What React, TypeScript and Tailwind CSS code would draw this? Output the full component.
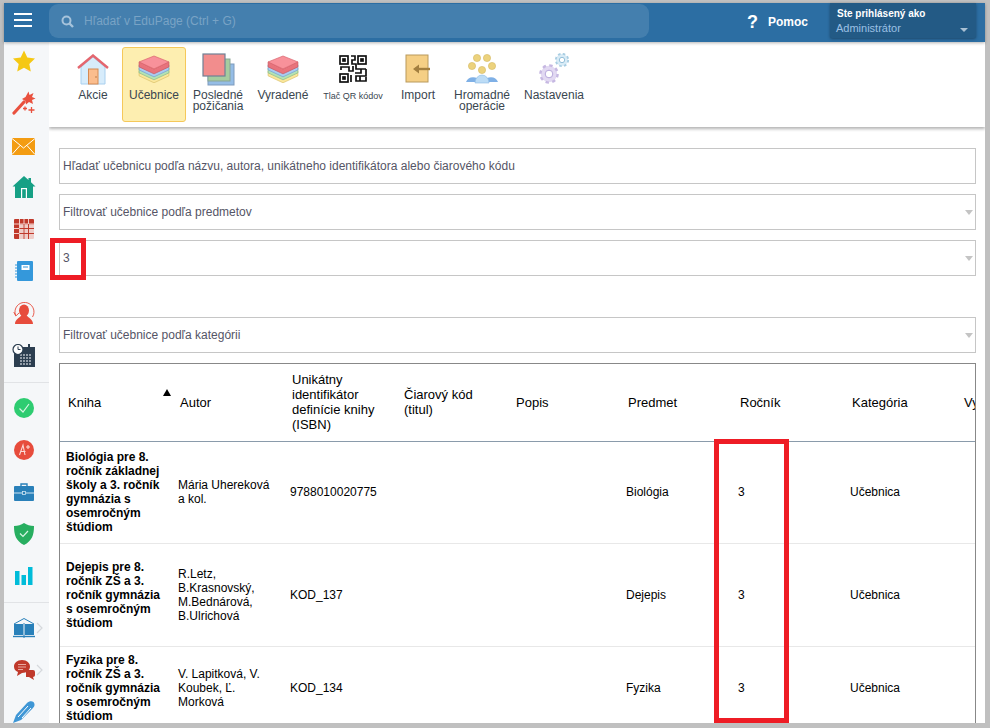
import React from "react";

function Layers({ s = 32 }: { s?: number }) {
  return (
    <svg width={s} height={s * 0.9} viewBox="0 0 32 29">
      <path d="M1 16 L16 23 L31 16 V21 L16 28 L1 21 Z" fill="#fbe79b" stroke="#d9c168" strokeWidth="0.7" />
      <path d="M1 13 L16 20 L31 13 V18 L16 25 L1 18 Z" fill="#b5e2b4" stroke="#85b98a" strokeWidth="0.7" />
      <path d="M1 10 L16 17 L31 10 V15 L16 22 L1 15 Z" fill="#a9cdf2" stroke="#6f9fd2" strokeWidth="0.7" />
      <path d="M1 7 L16 14 L31 7 V12 L16 19 L1 12 Z" fill="#e8737c" stroke="#c9545e" strokeWidth="0.7" />
      <path d="M1 7 L16 1 L31 7 L16 14 Z" fill="#f8919a" stroke="#d9636d" strokeWidth="0.7" />
    </svg>
  );
}

const tools: { label: React.ReactNode; w: string; icon: React.ReactNode; active?: boolean; small?: boolean }[] = [
  {
    label: "Akcie",
    w: "w-[58px]",
    icon: (
      <svg width="32" height="31" viewBox="0 0 32 31">
        <path d="M4 13 L16 3 L28 13 V30 H4 Z" fill="#d7ecfb" stroke="#a9d0ee" />
        <path d="M1 14 L16 1.5 L31 14" fill="none" stroke="#e4666f" strokeWidth="2.4" />
        <rect x="11.5" y="15" width="9.5" height="15" fill="#fbbd8d" stroke="#d58a52" />
        <circle cx="19" cy="23" r="0.7" fill="#a8652e" />
      </svg>
    ),
  },
  { label: "Učebnice", w: "w-[64px]", icon: <Layers />, active: true },
  {
    label: (
      <>
        Posledné
        <br />
        požičania
      </>
    ),
    w: "w-[64px]",
    icon: (
      <svg width="33" height="33" viewBox="0 0 33 33">
        <rect x="6" y="11" width="26" height="21" fill="#95bde6" stroke="#7f9bbd" />
        <rect x="6" y="6" width="22" height="22" fill="#a5cc9f" stroke="#8aa596" />
        <rect x="1" y="1" width="22" height="22" fill="#f28d8d" stroke="#6f8196" strokeWidth="1.2" />
      </svg>
    ),
  },
  { label: "Vyradené", w: "w-[66px]", icon: <Layers /> },
  {
    label: "Tlač QR kódov",
    w: "w-[74px]",
    small: true,
    icon: (
      <svg width="28" height="28" viewBox="0 0 28 28" fill="none" stroke="#111" strokeWidth="1.7">
        <rect x="1" y="1" width="8" height="8" />
        <rect x="4" y="4" width="2" height="2" fill="#111" />
        <rect x="19" y="1" width="8" height="8" />
        <rect x="22" y="4" width="2" height="2" fill="#111" />
        <rect x="1" y="19" width="8" height="8" />
        <rect x="4" y="22" width="2" height="2" fill="#111" />
        <path d="M12 1 H16 V5 H13 V9 H17 V14 H27 M2 15 V12 H10 V16 H14 V11 M12 20 V27 M16 18 H22 V14 M27 14 V21 H17 V26 H27 V22 M21 21 V26" />
      </svg>
    ),
  },
  {
    label: "Import",
    w: "w-[56px]",
    icon: (
      <svg width="26" height="30" viewBox="0 0 26 30">
        <rect x="1" y="1" width="22" height="27" fill="#f5cf85" stroke="#b99a5c" />
        <path d="M25 15 H10" stroke="#a37f3f" strokeWidth="2.4" />
        <path d="M8 15 L14 10.5 V19.5 Z" fill="#a37f3f" />
      </svg>
    ),
  },
  {
    label: (
      <>
        Hromadné
        <br />
        operácie
      </>
    ),
    w: "w-[72px]",
    icon: (
      <svg width="34" height="30" viewBox="0 0 34 30">
        <circle cx="12" cy="4" r="3.6" fill="#ecd27d" stroke="#d3b961" strokeWidth="0.6" />
        <circle cx="22" cy="4" r="3.6" fill="#ecd27d" stroke="#d3b961" strokeWidth="0.6" />
        <circle cx="7" cy="12" r="3.6" fill="#ecd27d" stroke="#d3b961" strokeWidth="0.6" />
        <circle cx="27" cy="12" r="3.6" fill="#ecd27d" stroke="#d3b961" strokeWidth="0.6" />
        <circle cx="17" cy="16" r="3.6" fill="#ecd27d" stroke="#d3b961" strokeWidth="0.6" />
        <path d="M1 28 A7.5 7.5 0 0 1 15 28 Z" fill="#7fb0e6" />
        <path d="M19 28 A7.5 7.5 0 0 1 33 28 Z" fill="#7fb0e6" />
        <path d="M10 29 A7 8 0 0 1 24 29 Z" fill="#bcdcf6" stroke="#8cbbe4" strokeWidth="0.6" />
      </svg>
    ),
  },
  {
    label: "Nastavenia",
    w: "w-[72px]",
    icon: (
      <svg width="32" height="32" viewBox="0 0 32 32">
        <circle cx="11" cy="21" r="6" fill="none" stroke="#e2d9f2" strokeWidth="4.4" />
        <circle cx="11" cy="21" r="8.6" fill="none" stroke="#c6b8e2" strokeWidth="2.4" strokeDasharray="3.4 3.35" />
        <circle cx="11" cy="21" r="3.8" fill="#fff" stroke="#b5a5da" />
        <circle cx="24" cy="7" r="4.4" fill="none" stroke="#d8ebf6" strokeWidth="3.2" />
        <circle cx="24" cy="7" r="6.2" fill="none" stroke="#a8cde2" strokeWidth="1.8" strokeDasharray="2.6 2.27" />
        <circle cx="24" cy="7" r="2.7" fill="#fff" stroke="#94c0da" />
      </svg>
    ),
  },
];

const navA: React.ReactNode[] = [
  <svg key="star" width="24" height="24" viewBox="0 0 24 24"><path d="M12 1.5 L15.3 8.6 L23 9.6 L17.3 14.9 L18.8 22.5 L12 18.7 L5.2 22.5 L6.7 14.9 L1 9.6 L8.7 8.6 Z" fill="#f5c814" /></svg>,
  <svg key="wand" width="24" height="24" viewBox="0 0 24 24">
    <path d="M2 22 L12 11" stroke="#e9513f" strokeWidth="3.2" strokeLinecap="round" />
    <path d="M16.5 0.5 L17.5 4 L21.5 2 L20 6 L23.5 7.5 L20 9 L21 13 L17 11 L14 13.5 L13.5 10 L10 8 L13.5 6 Z" fill="#e9513f" />
    <path d="M19.5 16 v6 M16.5 19 h6 M13 15.5 v4 M11 17.5 h4" stroke="#e9513f" strokeWidth="1.3" />
  </svg>,
  <svg key="mail" width="24" height="20" viewBox="0 -3 24 20">
    <rect width="23" height="17" fill="#f39c12" />
    <path d="M0 0.5 L11.5 10 L23 0.5 M0 16.5 L8 7.5 M23 16.5 L15 7.5" stroke="#fff" strokeWidth="1" fill="none" />
  </svg>,
  <svg key="home" width="24" height="24" viewBox="0 0 24 24">
    <path d="M12 1 L16.5 5 V3 H19 V7.2 L23.5 11.5 H21 V23 H3 V11.5 H0.5 Z" fill="#16a085" />
    <rect x="9" y="13" width="6" height="10" fill="#fff" />
    <rect x="10.2" y="14.2" width="3.6" height="8.8" fill="#16a085" />
  </svg>,
  <svg key="tt" width="20" height="20" viewBox="0 0 20 20">
    <rect width="20" height="20" rx="1" fill="#c0392b" />
    <path d="M5.5 0 V20 M10 0 V20 M14.5 0 V20 M0 5 H20 M0 9.5 H20 M0 14.5 H20" stroke="#f3cfca" strokeWidth="1" />
    <rect x="6" y="5.5" width="14" height="14.5" fill="#fff" opacity="0.75" />
    <path d="M10 5 V20 M14.5 5 V20 M5.5 9.5 H20 M5.5 14.5 H20" stroke="#c0392b" strokeWidth="1" />
  </svg>,
  <svg key="note" width="18" height="21" viewBox="0 0 18 21">
    <rect x="2" width="16" height="20" rx="1" fill="#3498db" />
    <rect x="6.5" y="4" width="8" height="5" fill="#fff" />
    <rect x="8" y="5.5" width="5" height="1" fill="#3498db" />
    <path d="M0 4 H3 M0 7 H3 M0 10 H3 M0 13 H3 M0 16 H3" stroke="#3498db" strokeWidth="1" />
  </svg>,
  <svg key="user" width="22" height="22" viewBox="0 0 22 22">
    <path d="M2.5 13 A9.5 9.5 0 1 1 19.5 15" fill="none" stroke="#e74c3c" strokeWidth="0.9" />
    <path d="M0.8 10 L2.8 14 L6 11" fill="none" stroke="#e74c3c" strokeWidth="0.9" />
    <ellipse cx="11" cy="8.5" rx="5" ry="6" fill="#e74c3c" />
    <path d="M2 22 C2 17 7 16 8.5 13 H13.5 C15 16 20 17 20 22 Z" fill="#e74c3c" />
  </svg>,
  <svg key="cal" width="24" height="23" viewBox="0 0 24 23">
    <rect x="2" y="3" width="21" height="20" fill="#2c3e50" />
    <rect x="16" y="0" width="2" height="5" fill="#2c3e50" />
    <path d="M8 11 H20 M8 14 H20 M8 17 H20 M8 20 H20" stroke="#b4bcc4" strokeWidth="1.6" strokeDasharray="2 1" />
    <circle cx="6" cy="5.5" r="5" fill="#fff" stroke="#2c3e50" strokeWidth="1.2" />
    <path d="M6 2.5 V5.5 H8.5" stroke="#2c3e50" strokeWidth="1" fill="none" />
  </svg>,
];

const navB: React.ReactNode[] = [
  <svg key="ok" width="20" height="20" viewBox="0 0 20 20"><circle cx="10" cy="10" r="10" fill="#2ecc71" /><path d="M5.5 10.5 L9 14 L15 6" fill="none" stroke="#d7f5e3" strokeWidth="1.2" /></svg>,
  <svg key="a" width="20" height="20" viewBox="0 0 20 20"><circle cx="10" cy="10" r="10" fill="#e74c3c" /><path d="M5.5 15 L9 5 L11 15 M6.5 11.5 H11.5 M14 5 V9 M12 7 H16" fill="none" stroke="#fbdad6" strokeWidth="1.1" /></svg>,
  <svg key="case" width="20" height="18" viewBox="0 0 20 18">
    <rect y="3" width="20" height="15" rx="1" fill="#2980b9" />
    <path d="M7 3 V1 H13 V3" fill="none" stroke="#2980b9" strokeWidth="1.4" />
    <path d="M0 10 H20" stroke="#cde3f2" strokeWidth="1" />
    <rect x="8.5" y="8.5" width="3" height="3" fill="#2980b9" stroke="#cde3f2" strokeWidth="0.8" />
  </svg>,
  <svg key="shield" width="20" height="22" viewBox="0 0 20 22">
    <path d="M10 0 C13 2 16 3 20 3 C20 12 18 18 10 22 C2 18 0 12 0 3 C4 3 7 2 10 0 Z" fill="#27ae60" />
    <path d="M6 10.5 L9 13.5 L14 8" fill="none" stroke="#d7f5e3" strokeWidth="1.2" />
  </svg>,
  <svg key="bars" width="18" height="18" viewBox="0 0 18 18">
    <rect x="0" y="4" width="4.5" height="14" fill="#00bcd9" />
    <rect x="6.5" y="8" width="4.5" height="10" fill="#00bcd9" />
    <rect x="13" y="0" width="4.5" height="18" fill="#00bcd9" />
  </svg>,
];

const navC: React.ReactNode[] = [
  <svg key="book" width="22" height="20" viewBox="0 0 22 20">
    <path d="M1 6 L11 0.5 L21 6" fill="none" stroke="#2980b9" strokeWidth="1" />
    <path d="M1 6 H10 V17 H1 Z M12 6 H21 V17 H12 Z" fill="#2980b9" />
    <path d="M0 18.5 H22" stroke="#2980b9" strokeWidth="1.4" />
    <path d="M11 5 V20" stroke="#2980b9" strokeWidth="1" />
  </svg>,
  <svg key="chat" width="21" height="20" viewBox="0 0 21 20">
    <path d="M12 10 H19 A2 2 0 0 1 21 12 V15 C21 16 20 17 19 17 L20 20 L15 17 H12 Z" fill="#c0392b" />
    <path d="M8 0 C13 0 16 3 16 6.5 C16 10 13 13 8 13 L3 16 L4 12 C1 11 0 9 0 6.5 C0 3 3 0 8 0 Z" fill="#c0392b" />
    <path d="M4 4.5 H12 M4 7 H12 M4 9.5 H9" stroke="#e9a79f" strokeWidth="1" />
  </svg>,
  <svg key="pen" width="22" height="22" viewBox="0 0 22 22">
    <path d="M0 22 L3 14 L14 2 C16 0 19 0 20.5 1 L9 13 L13 5 L20.5 1 C22 3 22 5 20 7 L8 19 Z" fill="#3f97d6" />
    <path d="M5 16 L15 5 M9 17 L18 7" stroke="#fff" strokeWidth="1" />
  </svg>,
];

function NavIcon({ children, chevron }: { children: React.ReactNode; chevron?: boolean }) {
  return (
    <div className="relative flex h-[24px] w-full items-center justify-center pr-[5px]">
      {children}
      {chevron && (
        <svg className="absolute left-[32px] top-[6px]" width="7" height="12" viewBox="0 0 7 12">
          <path d="M1 1 L6 6 L1 11" fill="none" stroke="#d5d8dc" strokeWidth="1.2" />
        </svg>
      )}
    </div>
  );
}

function Field({ text, arrow, className = "" }: { text: string; arrow?: boolean; className?: string }) {
  return (
    <div className={`flex h-[36px] items-center justify-between border border-[#c6c6c6] bg-white pl-[3px] pr-[2px] text-[12px] text-[#555566] ${className}`}>
      <span>{text}</span>
      {arrow && <span className="h-0 w-0 border-x-[4px] border-t-[5px] border-x-transparent border-t-[#c4c4c4]" />}
    </div>
  );
}

const headers: React.ReactNode[] = [
  "Kniha",
  "Autor",
  <>
    Unikátny
    <br />
    identifikátor
    <br />
    definície knihy
    <br />
    (ISBN)
  </>,
  <>
    Čiarový kód
    <br />
    (titul)
  </>,
  "Popis",
  "Predmet",
  "Ročník",
  "Kategória",
  "Vyradené",
];

const rows = [
  {
    h: "h-[102px]",
    title: "Biológia pre 8. ročník základnej školy a 3. ročník gymnázia s osemročným štúdiom",
    author: "Mária Uhereková a kol.",
    code: "9788010020775",
    subject: "Biológia",
  },
  {
    h: "h-[103px]",
    title: "Dejepis pre 8. ročník ZŠ a 3. ročník gymnázia s osemročným štúdiom",
    author: "R.Letz, B.Krasnovský, M.Bednárová, B.Ulrichová",
    code: "KOD_137",
    subject: "Dejepis",
  },
  {
    h: "h-[83px]",
    title: "Fyzika pre 8. ročník ZŠ a 3. ročník gymnázia s osemročným štúdiom",
    author: "V. Lapitková, V. Koubek, Ľ. Morková",
    code: "KOD_134",
    subject: "Fyzika",
  },
];

export default function App() {
  return (
    <div className="relative flex h-[728px] w-[990px] flex-col overflow-hidden bg-[#c0c0c0] pb-[5px] pl-[4px] pr-[5px] pt-[3px] font-['Liberation_Sans',Arial,sans-serif]">
      <header className="relative z-20 flex h-[39px] shrink-0 items-start bg-[#2c6ea3] shadow-[0_1px_3px_rgba(0,0,0,0.3)]">
        <button className="mr-[8px] flex h-[33px] w-[37px] shrink-0 flex-col items-center justify-center gap-[4px]">
          <span className="h-[2px] w-[18px] bg-white" />
          <span className="h-[2px] w-[18px] bg-white" />
          <span className="h-[2px] w-[18px] bg-white" />
        </button>
        <div className="mt-[1px] flex h-[34px] w-[600px] shrink-0 items-center rounded-[9px] bg-[#447fae] pl-[12px] text-[12px] text-[#79a3c5]">
          <svg width="13" height="13" viewBox="0 0 13 13" className="mr-[10px]">
            <circle cx="5.5" cy="5.5" r="4" fill="none" stroke="#a6c3db" strokeWidth="2" />
            <path d="M8.5 8.5 L12 12" stroke="#a6c3db" strokeWidth="2.4" />
          </svg>
          Hľadať v EduPage (Ctrl + G)
        </div>
        <div className="ml-[98px] mt-[9px] flex w-[83px] shrink-0 items-center text-[12px] font-bold text-white">
          <span className="w-[21px] text-[18px] leading-[20px]">?</span>
          Pomoc
        </div>
        <div className="relative h-[35px] w-[146px] shrink-0 rounded-b-[2px] bg-[#235a85] pl-[7px] pt-[5px] shadow-[0_1px_3px_rgba(0,0,0,0.35)]">
          <div className="text-[10px] font-bold leading-[12px] text-white">Ste prihlásený ako</div>
          <div className="-ml-[1px] mt-[2px] text-[11px] leading-[12px] text-[#9cc0e4]">Administrátor</div>
          <span className="absolute right-[8px] top-[25px] h-0 w-0 border-x-[4px] border-t-[4px] border-x-transparent border-t-[#a9c0d3]" />
        </div>
      </header>

      <div className="flex min-h-0 flex-1">
        <nav className="flex w-[45px] shrink-0 flex-col overflow-hidden bg-[#f5f7f9] pt-[7px]">
          <div className="flex flex-col gap-[18px] pb-[15px]">
            {navA.map((ic, i) => (
              <NavIcon key={i}>{ic}</NavIcon>
            ))}
          </div>
          <div className="flex flex-col gap-[18px] border-t border-[#e1e3e6] pb-[14px] pt-[13px]">
            {navB.map((ic, i) => (
              <NavIcon key={i}>{ic}</NavIcon>
            ))}
          </div>
          <div className="flex flex-col gap-[18px] border-t border-[#e1e3e6] pt-[13px]">
            {navC.map((ic, i) => (
              <NavIcon key={i} chevron={i < 2}>
                {ic}
              </NavIcon>
            ))}
          </div>
        </nav>

        <main className="flex min-w-0 flex-1 flex-col overflow-hidden bg-white">
          <div className="relative z-10 flex h-[85px] shrink-0 items-start pl-[15px] pt-[5px] shadow-[0_2px_3px_rgba(0,0,0,0.3)]">
            {tools.map((t, i) => (
              <div
                key={i}
                className={`flex h-[75px] shrink-0 flex-col items-center rounded-[3px] border pt-[5px] ${t.w} ${
                  t.active ? "border-[#f5c85a] bg-[#fdeeb0]" : "border-transparent"
                }`}
              >
                <div className="flex h-[32px] items-center justify-center">{t.icon}</div>
                <div
                  className={`whitespace-nowrap text-center text-[#3a4650] ${
                    t.small ? "mt-[6px] text-[9px] leading-[11px]" : "mt-[5px] text-[12px] leading-[11px]"
                  }`}
                >
                  {t.label}
                </div>
              </div>
            ))}
          </div>

          <div className="flex min-h-0 flex-1 flex-col pl-[10px] pr-[9px] pt-[21px]">
            <Field text="Hľadať učebnicu podľa názvu, autora, unikátneho identifikátora alebo čiarového kódu" />
            <Field className="mt-[10px]" text="Filtrovať učebnice podľa predmetov" arrow />
            <Field className="mt-[10px]" text="3" arrow />
            <Field className="mt-[41px]" text="Filtrovať učebnice podľa kategórii" arrow />
            <div className="relative mt-[10px] min-h-0 flex-1 overflow-hidden border-l border-r border-t border-[#888888]">
              <table className="w-[1008px] table-fixed border-collapse text-left text-black">
                <thead>
                  <tr className="h-[77px] border-b border-[#8a9bab] text-[13px] leading-[15px]">
                    {headers.map((h, i) => (
                      <th key={i} className="w-[112px] pl-[8px] pr-[4px] align-middle font-normal">
                        {h}
                      </th>
                    ))}
                  </tr>
                </thead>
                <tbody className="text-[12px] leading-[14px]">
                  {rows.map((r, i) => (
                    <tr key={i} className={`${r.h} border-b border-[#e8e8e8]`}>
                      <td className="w-[112px] pl-[6px] pr-[10px] align-middle font-bold">{r.title}</td>
                      <td className="pl-[6px] pr-[10px] align-middle">{r.author}</td>
                      <td className="pl-[6px] pr-[4px] align-middle">{r.code}</td>
                      <td />
                      <td />
                      <td className="pl-[6px] align-middle">{r.subject}</td>
                      <td className="pl-[6px] align-middle">3</td>
                      <td className="pl-[6px] align-middle">Učebnica</td>
                      <td />
                    </tr>
                  ))}
                </tbody>
              </table>
              <span className="absolute left-[103px] top-[25px] h-0 w-0 border-x-[4px] border-b-[7px] border-x-transparent border-b-black" />
            </div>
          </div>
        </main>
      </div>

      <div className="absolute left-[50px] top-[238px] z-30 h-[42px] w-[36px] border-[5px] border-[#ee1c25]" />
      <div className="absolute left-[714px] top-[439px] z-30 h-[284px] w-[75px] border-[5px] border-[#ee1c25]" />
    </div>
  );
}
